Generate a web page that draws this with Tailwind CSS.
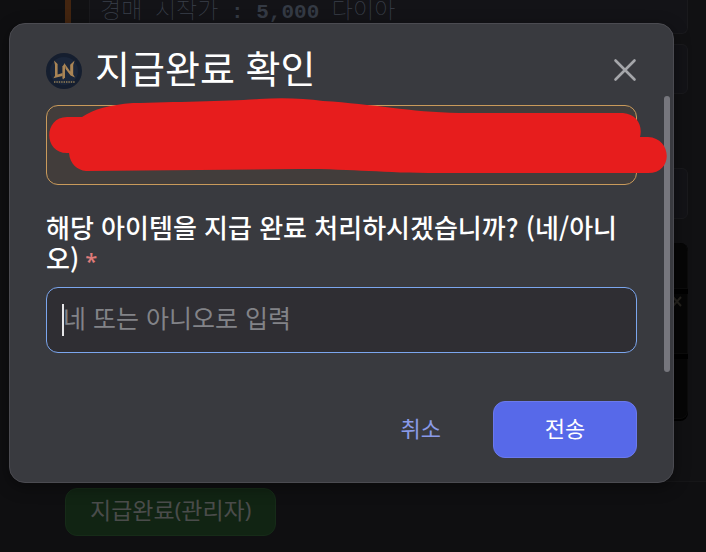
<!DOCTYPE html>
<html lang="ko">
<head>
  <meta charset="UTF-8" />
  <meta name="viewport" content="width=device-width, initial-scale=1.0"/>
  <title>지급완료 확인</title>
  <script src="https://cdn.jsdelivr.net/npm/@tailwindcss/browser@4"></script>
</head>
<body class="bg-[#0f0f11] font-['Noto_Sans_CJK_KR',sans-serif] text-white">
  <div class="relative h-screen overflow-hidden">

    <!-- dimmed channel behind the dialog -->
    <main class="pl-[65px]">
      <section class="flex flex-col gap-[10px] h-[482px] border-l-6 border-b border-l-[#432510] border-b-[#161618] bg-[#111113] pl-[18px] pr-[18px]">
        <pre class="h-[34px] shrink-0 rounded-b-md border border-t-0 border-[#1a1a1d] bg-[#131317] px-[10px] font-['Liberation_Mono','Noto_Sans_CJK_KR',monospace] text-[21px] leading-4 text-[#3a404b]"><span class="font-['Noto_Sans_CJK_KR',monospace] text-[23px] leading-4 font-thin">경매</span> <span class="font-['Noto_Sans_CJK_KR',monospace] text-[23px] leading-4 font-thin">시작가</span> <b class="text-[#343a44]">: 5,000</b> <span class="font-['Noto_Sans_CJK_KR',monospace] text-[23px] leading-4 font-thin">다이아</span></pre>
        <div class="h-[50px] shrink-0 rounded-md border border-[#1a1a1d] bg-[#131317]"></div>
        <div class="mt-[64px] h-[51px] shrink-0 rounded-md border border-[#1a1a1d] bg-[#131317]"></div>
        <div class="mt-[14px] flex h-[178px] shrink-0 flex-col gap-[5px] rounded-lg bg-black">
          <div class="h-[46px] rounded-t-lg border-r border-b border-[#0c0c0c] bg-[#060606]"></div>
          <div class="flex h-[60px] justify-end border-r border-b border-[#0c0c0c] bg-[#060606] pt-[2px] pr-1">
            <svg class="size-3" viewBox="0 0 12 12" fill="none" stroke="#25231e" stroke-width="2"><path d="M2 1l8 9M10 1l-8 9"/></svg>
          </div>
          <div class="h-[60px] rounded-b-lg border-r border-b border-[#0c0c0c] bg-[#060606]"></div>
        </div>
      </section>
      <button type="button" class="mt-[6px] flex h-12 items-start rounded-xl border border-[#162b18] bg-[#112413] px-6 pt-1 text-[23px] leading-8 text-[#4a4c4b]">지급완료<span class="font-['Noto_Sans',sans-serif] text-[22px]">(</span>관리자<span class="font-['Noto_Sans',sans-serif] text-[22px]">)</span></button>
    </main>

    <div role="dialog" aria-labelledby="dialogTitle" class="absolute top-[23px] right-8 left-[9px] rounded-2xl border border-[#4b4b51] bg-[#393a3f] shadow-[0_4px_16px_rgba(0,0,0,0.4)]">
      <header class="flex h-[81px] items-center px-9 pt-3">
        <svg class="size-9 shrink-0" viewBox="0 0 36 36" aria-hidden="true">
          <circle cx="18" cy="18" r="18" fill="#151e2f"/>
          <circle cx="18" cy="18" r="14" fill="#1b263a"/>
          <g fill="#a98455">
            <path d="M8 7.5l3.6 3.6v10.4l5-1.6v3l-5.4 1.4-3.8 1 1.6-2.6V12z"/>
            <path d="M16.4 25V13.5l2.6-3.5v14.6l-2 2z"/>
            <path d="M18.6 10.4l5.6 8.2v-6.8l4.4-4.2-1.4 4.4v9.4l1.8 3.2-4.4-2.2-5-6.4z"/>
          </g>
          <path d="M8 29h21" stroke="#75684f" stroke-width="1.8" stroke-dasharray="1.4 1"/>
        </svg>
        <h1 id="dialogTitle" class="ml-[13px] flex-1 pb-2 text-[38px] leading-[48px] font-normal">지급완료 확인</h1>
        <button type="button" aria-label="닫기" class="pb-[2px] text-[#a5a6aa]">
          <svg class="size-6" viewBox="0 0 24 24" fill="none" stroke="currentColor" stroke-width="2.6" stroke-linecap="round"><path d="M2.5 2.5l19 19M21.5 2.5l-19 19"/></svg>
        </button>
      </header>

      <div class="relative px-9">
        <div class="h-20 rounded-xl border border-[#c99a5b] bg-[#423d3b]"></div>
        <label for="answer" class="mt-[26px] block text-[26px] leading-[31px] font-medium">해당 아이템을 지급 완료 처리하시겠습니까? (네/아니오)<span class="ml-[6px] font-['Noto_Sans',sans-serif] text-[22px] leading-none text-[#e07c7a]">*</span></label>
        <div class="relative mt-[14px]">
          <input id="answer" type="text" placeholder="네 또는 아니오로 입력" class="block h-[66px] w-full rounded-xl border border-[#7ba6ee] bg-[#2f2e33] px-4 pb-[6px] text-[25px] text-white caret-transparent outline-none placeholder:text-[#828388]"/>
          <span class="absolute top-[17px] left-4 h-8 w-[2px] bg-[#e6e6e8]"></span>
        </div>
        <div class="absolute -top-[9px] right-[3px] z-10 h-[276px] w-[6px] rounded-full bg-[#76767d]"></div>
        <!-- marker stroke hiding the item name -->
        <svg class="absolute -top-2 left-[39px] z-20 h-[76px] w-[calc(100%-45px)]" viewBox="0 0 618 76" preserveAspectRatio="none" fill="#e71d1d" aria-hidden="true">
          <path d="M18 20H33C45 12 60 8 84 6C125 5 180 4 210 2Q245 0 274 4C325 7 360 15 410 16H574C588 17 594 29 591 40H599C623 41 625 76 599 76H390C330 76 310 72 250 72L37 74C28 73 21 67 20 56C-6 58-6 20 18 20Z"/>
        </svg>
      </div>

      <footer class="mt-12 flex justify-end gap-2 px-9 pb-6">
        <button type="button" class="h-[57px] px-11 pb-[6px] text-[22px] leading-8 text-[#8a9ae8]">취소</button>
        <button type="button" class="h-[57px] w-36 rounded-xl border border-[#6b79ed] bg-[#5769e9] pb-[6px] text-[22px] leading-8 text-white">전송</button>
      </footer>
    </div>
  </div>
</body>
</html>
